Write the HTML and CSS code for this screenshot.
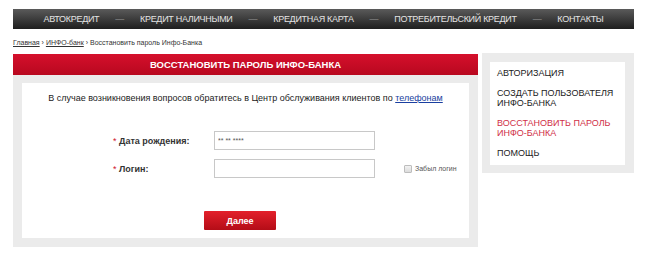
FILE: index.html
```html
<!DOCTYPE html>
<html lang="ru">
<head>
  <meta charset="UTF-8">
  <title>Восстановить пароль Инфо-Банка</title>
  <link rel="stylesheet" href="styles.css">
</head>
<body>
  <div class="page">
    <nav class="topnav">
      <a href="#">АВТОКРЕДИТ</a>
      <span class="sep">—</span>
      <a href="#">КРЕДИТ НАЛИЧНЫМИ</a>
      <span class="sep">—</span>
      <a href="#">КРЕДИТНАЯ КАРТА</a>
      <span class="sep">—</span>
      <a href="#">ПОТРЕБИТЕЛЬСКИЙ КРЕДИТ</a>
      <span class="sep">—</span>
      <a href="#">КОНТАКТЫ</a>
    </nav>

    <div class="crumbs">
      <a href="#">Главная</a> › <a href="#">ИНФО-банк</a> › Восстановить пароль Инфо-Банка
    </div>

    <div class="layout">
      <div class="main">
        <h1 class="main-title">ВОССТАНОВИТЬ ПАРОЛЬ ИНФО-БАНКА</h1>
        <div class="panel">
          <div class="panel-inner">
            <p class="note">В случае возникновения вопросов обратитесь в Центр обслуживания клиентов по <a href="#">телефонам</a></p>

            <form class="form">
              <div class="row">
                <label class="lbl" for="birth"><span class="req">*</span> Дата рождения:</label>
                <input class="field mask" id="birth" type="text" value="** ** ****">
              </div>
              <div class="row">
                <label class="lbl" for="login"><span class="req">*</span> Логин:</label>
                <input class="field" id="login" type="text">
                <label class="forgot"><input type="checkbox"> Забыл логин</label>
              </div>
              <div class="actions">
                <button type="button" class="btn">Далее</button>
              </div>
            </form>
          </div>
        </div>
      </div>

      <aside class="side">
        <div class="side-inner">
          <a href="#">АВТОРИЗАЦИЯ</a>
          <a href="#">СОЗДАТЬ ПОЛЬЗОВАТЕЛЯ ИНФО-БАНКА</a>
          <a href="#" class="active">ВОССТАНОВИТЬ ПАРОЛЬ ИНФО-БАНКА</a>
          <a href="#">ПОМОЩЬ</a>
        </div>
      </aside>
    </div>
  </div>
</body>
</html>
```

FILE: styles.css
```css
body {
  margin: 0;
  font-family: 'Liberation Sans', Arial, sans-serif;
  background: #fff;
  color: #222;
}
.page {
  width: 621px;
  margin-left: 13px;
  padding-top: 9px;
}
.topnav {
  height: 20px;
  display: flex;
  align-items: center;
  justify-content: center;
  background: linear-gradient(#5a5a5a, #1e1e1e);
  font-size: 9px;
  letter-spacing: -0.3px;
}
.topnav a {
  color: #e4e4e4;
  text-decoration: none;
}
.topnav .sep {
  color: #9a9a9a;
  margin: 0 16px;
}
.crumbs {
  font-size: 7px;
  color: #333;
  margin-top: 10px;
  height: 15px;
}
.crumbs a {
  color: #333;
}
.layout {
  display: flex;
  gap: 4px;
}
.main {
  width: 465px;
}
.main-title {
  margin: 0;
  height: 21px;
  line-height: 21px;
  text-align: center;
  color: #fff;
  font-size: 9.5px;
  font-weight: bold;
  background: linear-gradient(#d5102c, #b8081f);
}
.panel {
  background: #ebebeb;
  padding: 8px 9px 9px;
}
.panel-inner {
  background: #fff;
  height: 145px;
  padding-top: 10px;
}
.note {
  margin: 0;
  font-size: 9px;
  text-align: center;
}
.note a {
  color: #1a3fa0;
}
.form {
  margin-top: 28px;
}
.row {
  display: flex;
  align-items: center;
  height: 19px;
  margin-bottom: 9px;
}
.lbl {
  width: 101px;
  margin-left: 91px;
  font-size: 9px;
  font-weight: bold;
  color: #333;
}
.req {
  color: #d0102c;
  font-weight: normal;
}
.field {
  width: 161px;
  height: 19px;
  box-sizing: border-box;
  border: 1px solid #c8c8c8;
  padding: 0 3px;
  font-size: 7px;
  font-family: inherit;
  color: #555;
}
.forgot {
  display: flex;
  align-items: center;
  gap: 3px;
  margin-left: 29px;
  font-size: 7px;
  color: #555;
}
.forgot input {
  appearance: none;
  width: 8px;
  height: 8px;
  margin: 0;
  border: 1px solid #bdbdbd;
  border-radius: 1px;
  background: linear-gradient(#f2f2f2, #dcdcdc);
}
.actions {
  display: flex;
  justify-content: center;
  margin-top: 33px;
}
.btn {
  width: 72px;
  height: 19px;
  margin-right: 11px;
  border: 0;
  border-radius: 1px;
  background: linear-gradient(#e3202b, #b40d17);
  color: #fff;
  font-family: inherit;
  font-size: 9px;
  font-weight: bold;
}
.side {
  width: 152px;
  align-self: flex-start;
  margin-top: -1px;
}
.side-inner {
  border: 8px solid #ebebeb;
  border-top-width: 9px;
  border-right-width: 9px;
  background: #fff;
  padding: 6px 10px 7px 7px;
  display: flex;
  flex-direction: column;
  gap: 10px;
}
.side-inner a {
  font-size: 9px;
  line-height: 10px;
  color: #222;
  text-decoration: none;
}
.side-inner a.active {
  color: #d03048;
}
```
